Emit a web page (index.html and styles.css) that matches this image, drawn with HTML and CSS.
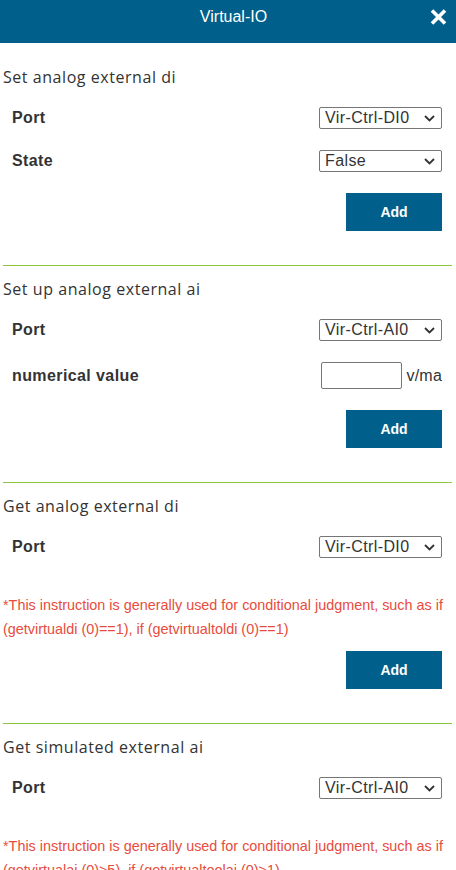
FILE: index.html
```html
<!DOCTYPE html>
<html lang="en">
<head>
<meta charset="utf-8">
<title>Virtual-IO</title>
<link rel="stylesheet" href="styles.css">
</head>
<body>
<header class="header">
  <span class="header-title">Virtual-IO</span>
  <button class="close" type="button" aria-label="Close">
    <svg width="17" height="16" viewBox="0 0 17 16"><path d="M2 1.5 L15 14.5 M15 1.5 L2 14.5" stroke="#fff" stroke-width="3.6" fill="none"/></svg>
  </button>
</header>
<main class="content">
  <section class="section section-first">
    <h2 class="section-title">Set analog external di</h2>
    <div class="form">
      <div class="row">
        <label class="label">Port</label>
        <div class="select-wrap">
          <select class="select"><option>Vir-Ctrl-DI0</option></select>
          <svg class="chevron" width="11" height="7" viewBox="0 0 11 7"><path d="M1 1 L5.5 5.5 L10 1" stroke="#333" stroke-width="1.8" fill="none"/></svg>
        </div>
      </div>
      <div class="row">
        <label class="label">State</label>
        <div class="select-wrap">
          <select class="select"><option>False</option></select>
          <svg class="chevron" width="11" height="7" viewBox="0 0 11 7"><path d="M1 1 L5.5 5.5 L10 1" stroke="#333" stroke-width="1.8" fill="none"/></svg>
        </div>
      </div>
    </div>
    <div class="actions"><button class="btn" type="button">Add</button></div>
  </section>

  <section class="section">
    <h2 class="section-title">Set up analog external ai</h2>
    <div class="form">
      <div class="row">
        <label class="label">Port</label>
        <div class="select-wrap">
          <select class="select"><option>Vir-Ctrl-AI0</option></select>
          <svg class="chevron" width="11" height="7" viewBox="0 0 11 7"><path d="M1 1 L5.5 5.5 L10 1" stroke="#333" stroke-width="1.8" fill="none"/></svg>
        </div>
      </div>
      <div class="row">
        <label class="label">numerical value</label>
        <div class="value-field">
          <input class="input" type="text">
          <span class="unit">v/ma</span>
        </div>
      </div>
    </div>
    <div class="actions"><button class="btn" type="button">Add</button></div>
  </section>

  <section class="section">
    <h2 class="section-title">Get analog external di</h2>
    <div class="form">
      <div class="row">
        <label class="label">Port</label>
        <div class="select-wrap">
          <select class="select"><option>Vir-Ctrl-DI0</option></select>
          <svg class="chevron" width="11" height="7" viewBox="0 0 11 7"><path d="M1 1 L5.5 5.5 L10 1" stroke="#333" stroke-width="1.8" fill="none"/></svg>
        </div>
      </div>
    </div>
    <p class="note">*This instruction is generally used for conditional judgment, such as if (getvirtualdi (0)==1), if (getvirtualtoldi (0)==1)</p>
    <div class="actions actions-after-note"><button class="btn" type="button">Add</button></div>
  </section>

  <section class="section">
    <h2 class="section-title">Get simulated external ai</h2>
    <div class="form">
      <div class="row">
        <label class="label">Port</label>
        <div class="select-wrap">
          <select class="select"><option>Vir-Ctrl-AI0</option></select>
          <svg class="chevron" width="11" height="7" viewBox="0 0 11 7"><path d="M1 1 L5.5 5.5 L10 1" stroke="#333" stroke-width="1.8" fill="none"/></svg>
        </div>
      </div>
    </div>
    <p class="note">*This instruction is generally used for conditional judgment, such as if (getvirtualai (0)&gt;5), if (getvirtualtoolai (0)&gt;1)</p>
    <div class="actions actions-after-note"><button class="btn" type="button">Add</button></div>
  </section>
</main>
</body>
</html>
```

FILE: styles.css
```css
* {
  box-sizing: border-box;
}

html, body {
  margin: 0;
  padding: 0;
  background: #fff;
}

body {
  font-family: "Liberation Sans", Arial, sans-serif;
  color: #333;
  width: 456px;
  overflow: hidden;
}

.header {
  position: relative;
  height: 43px;
  background: #005f8b;
  display: flex;
  justify-content: center;
  align-items: flex-start;
  padding: 8px 0 0 11px;
}

.header-title {
  color: #fff;
  font-size: 16px;
  line-height: 18px;
}

.close {
  position: absolute;
  top: 9px;
  right: 9px;
  width: 17px;
  height: 16px;
  padding: 0;
  border: 0;
  background: transparent;
  display: flex;
}

.content {
  padding: 0 4px 0 3px;
}

.section {
  padding: 11px 0 34px;
  border-bottom: 1px solid #8cc63f;
}

.section-first {
  padding-top: 22px;
}

.section-title {
  margin: 0;
  font-family: "Open Sans", "Noto Sans", sans-serif;
  font-weight: 400;
  font-size: 16px;
  line-height: 24px;
  letter-spacing: 0.55px;
  color: #333;
}

.form {
  margin-top: 18px;
  padding: 0 10px 0 9px;
  display: flex;
  flex-direction: column;
  gap: 21px;
}

.row {
  display: flex;
  align-items: center;
  justify-content: space-between;
}

.label {
  font-weight: 700;
  font-size: 16px;
  letter-spacing: 0.4px;
  color: #333;
}

.select-wrap {
  position: relative;
  width: 123px;
  height: 22px;
}

.select {
  appearance: none;
  -webkit-appearance: none;
  width: 100%;
  height: 22px;
  margin: 0;
  padding: 0 0 0 5px;
  border: 1px solid #767676;
  border-radius: 2px;
  background: #fff;
  font-family: "Liberation Sans", Arial, sans-serif;
  font-size: 16px;
  letter-spacing: 0.4px;
  line-height: 20px;
  color: #333;
}

.chevron {
  position: absolute;
  right: 7px;
  top: 8px;
  pointer-events: none;
}

.value-field {
  display: flex;
  align-items: center;
  gap: 5px;
}

.input {
  width: 81px;
  height: 27px;
  margin: 0;
  padding: 0 4px;
  border: 1px solid #767676;
  border-radius: 2px;
  background: #fff;
  font-size: 16px;
}

.unit {
  font-size: 16px;
  letter-spacing: 0.2px;
  color: #333;
}

.actions {
  margin-top: 21px;
  padding-right: 10px;
  display: flex;
  justify-content: flex-end;
}

.actions-after-note {
  margin-top: 10px;
}

.btn {
  width: 96px;
  height: 38px;
  border: 0;
  padding: 0;
  background: #005f8b;
  color: #fff;
  font-family: "Liberation Sans", Arial, sans-serif;
  font-weight: 700;
  font-size: 14px;
}

.note {
  margin: 35px 0 0;
  font-size: 14.4px;
  line-height: 24px;
  color: #e74c3c;
}
```
